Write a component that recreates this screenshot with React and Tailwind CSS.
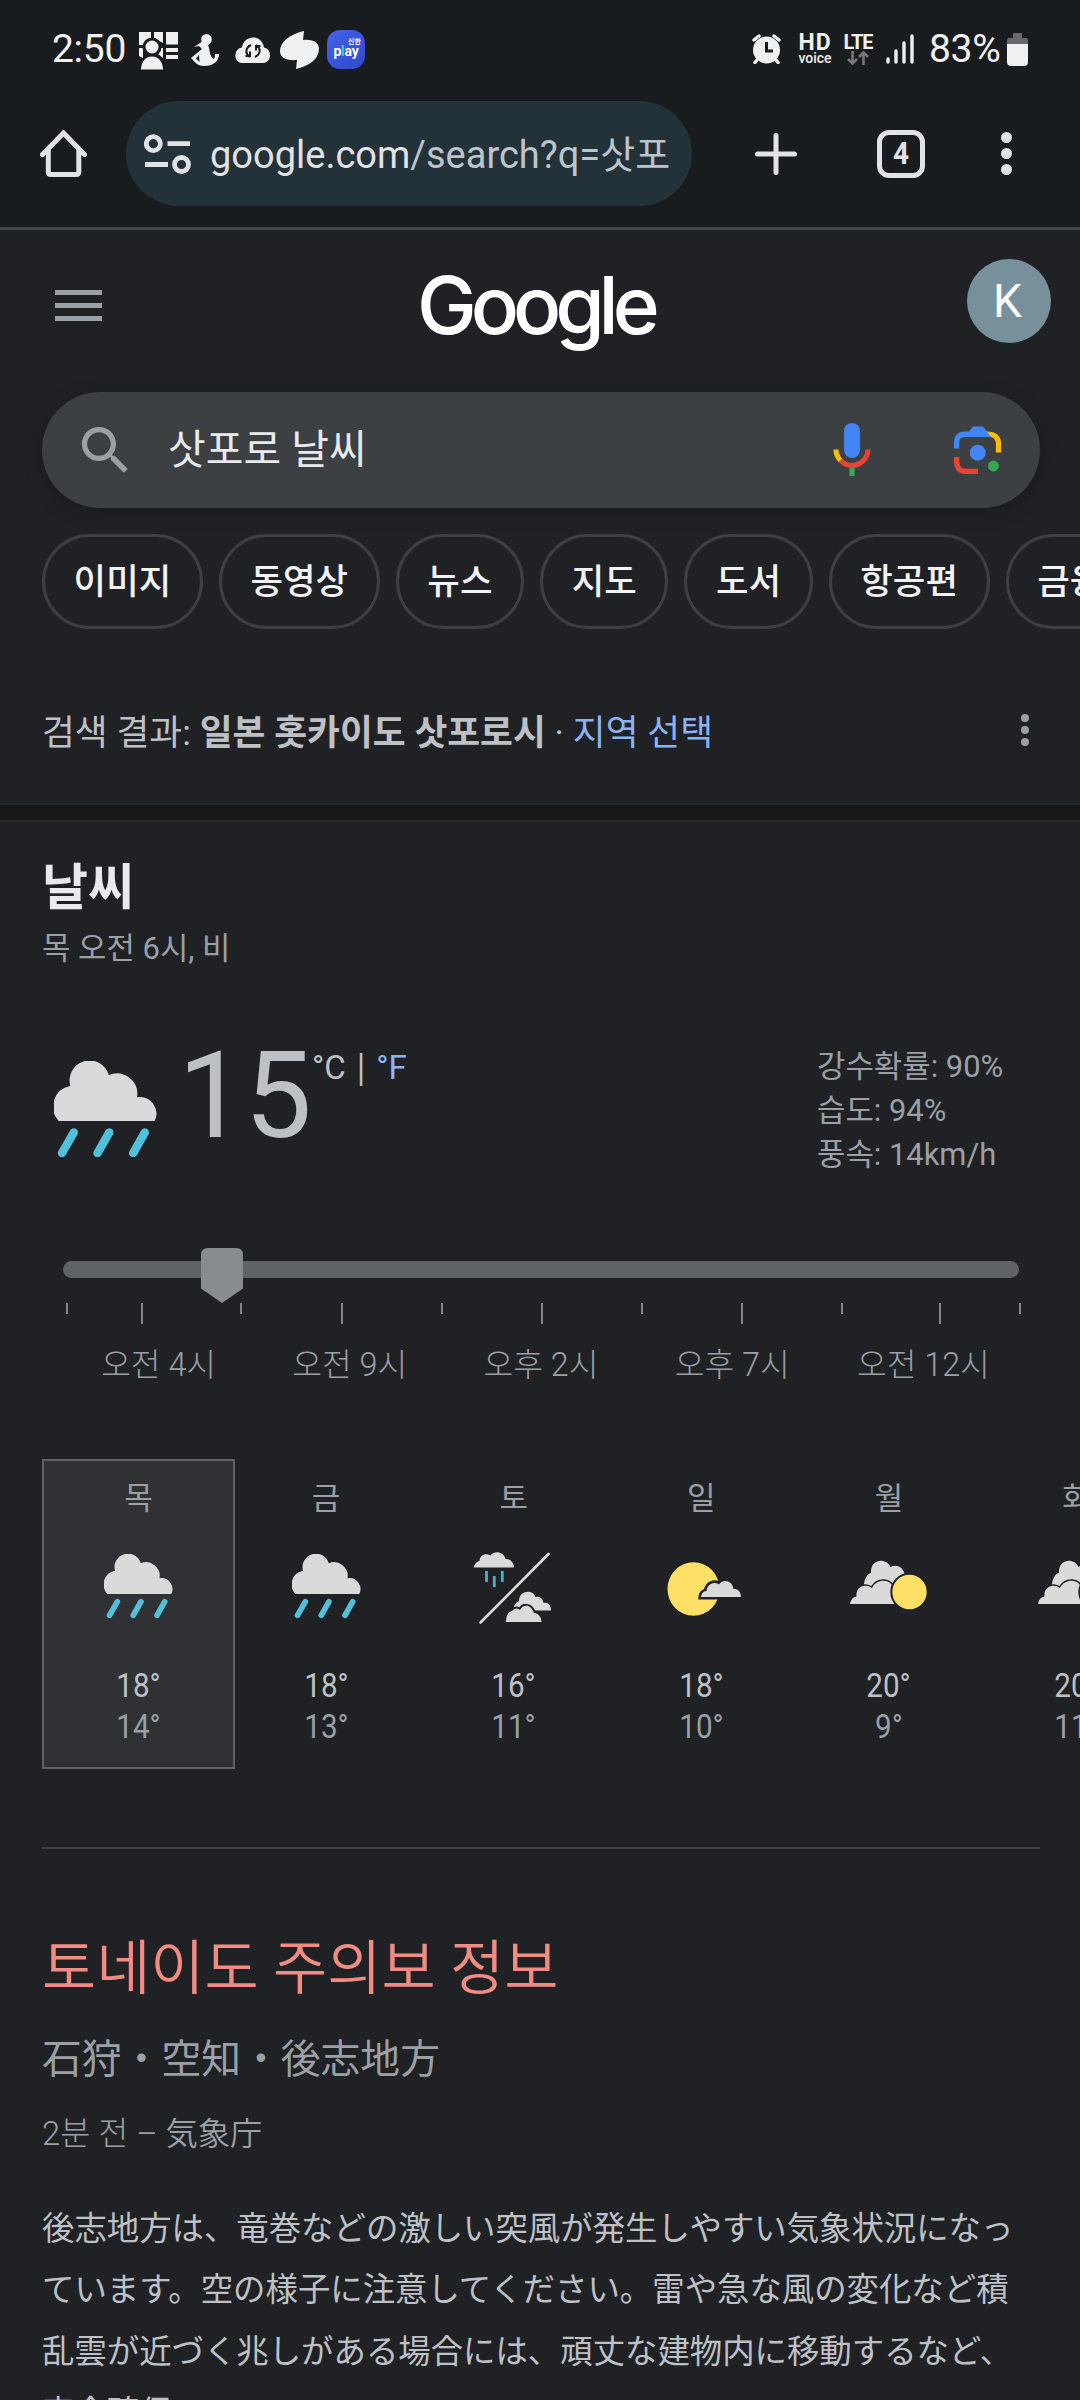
const filters = ["이미지", "동영상", "뉴스", "지도", "도서", "항공편", "금융"];

const hours = ["오전 4시", "오전 9시", "오후 2시", "오후 7시", "오전 12시"];

// gap to the next tick, in px
const ticks = [75, 99, 101, 100, 100, 100, 100, 100, 98, 80, 2];

const days = [
  { name: "목", icon: RainIcon, high: 18, low: 14, selected: true },
  { name: "금", icon: RainIcon, high: 18, low: 13 },
  { name: "토", icon: RainOrCloudIcon, high: 16, low: 11 },
  { name: "일", icon: MostlySunnyIcon, high: 18, low: 10 },
  { name: "월", icon: PartlyCloudyIcon, high: 20, low: 9 },
  { name: "화", icon: PartlyCloudyIcon, high: 20, low: 11 },
];

const alertLines = [
  "後志地方は、竜巻などの激しい突風が発生しやすい気象状況になっ",
  "ています。空の様子に注意してください。雷や急な風の変化など積",
  "乱雲が近づく兆しがある場合には、頑丈な建物内に移動するなど、",
  "安全確保",
];

function RainIcon({ className = "h-[64px] w-[69px]" }) {
  return (
    <svg viewBox="0 0 103 96" className={className}>
      <path
        d="M4.7 60A21 21 0 0 1 16.3 25A20 20 0 0 1 54.8 14A20.5 20.5 0 0 1 83 36.3A16.5 16.5 0 0 1 100.6 60Z"
        fill="#dadada"
      />
      <path
        d="M19.8 71.5L8 92M55.2 71.5L43.6 92M90.8 71.5L79.3 92"
        stroke="#4fc1dd"
        strokeWidth="8.5"
        strokeLinecap="round"
      />
    </svg>
  );
}

function RainOrCloudIcon() {
  return (
    <svg viewBox="0 0 79 76" className="mt-[3px] h-[76px] w-[79px]">
      <path d="M74.500 4L6.500 72.500" stroke="#dadada" strokeWidth="2.600" strokeLinecap="round" />
      <path
        d="M0 17.500C.500 13.500 3 11.500 5.500 11C5.500 5 11.500 2.500 16.500 5.500C20 .500 29.500 1 31.500 9C36 8.500 40 12.500 40 17.500Z"
        fill="#dadada"
      />
      <path
        d="M12.500 21V32M20.300 26V37M28.300 21V32"
        stroke="#4fb0c4"
        strokeWidth="2.800"
      />
      <path
        d="M40 58C40 54 43 52 45 51C45 40 59 39 61.500 47C66 45.500 69 49 69.500 53C74 52 77 55 77 60.500H61Z"
        fill="#dadada"
      />
      <path
        d="M32 72C32 66 34 62 38 61C42 56.500 45 59 46 60C49 54 57 54 60 63C64 63 67.500 67 67.500 72Z"
        fill="#dadada"
        stroke="#202124"
        strokeWidth="4"
        paintOrder="stroke"
      />
    </svg>
  );
}

function MostlySunnyIcon() {
  return (
    <svg viewBox="0 0 80 76" className="mt-[5px] h-[76px] w-[80px]">
      <ellipse cx="32.500" cy="38" rx="26" ry="26.700" fill="#ffe066" />
      <path
        d="M40 46C40.500 42 42.500 40.500 45.500 40C46 32.500 54 30 58 33.500C62 27.500 71.500 29.500 72.500 38C77 37.500 80 41 80 46Z"
        fill="#dadada"
        stroke="#202124"
        strokeWidth="5"
        paintOrder="stroke"
      />
    </svg>
  );
}

function PartlyCloudyIcon() {
  return (
    <svg viewBox="0 0 78 76" className="mt-[4px] h-[76px] w-[78px]">
      <path
        d="M14 40C13 32 16 24 21 23C20 9 36 7 40.500 17C46 14 53.500 17 55 25L50 42H18Z"
        fill="#dadada"
      />
      <path
        d="M0 54C1 49 3.500 47 6.500 46.500C5.500 37 15 33 22 38C27 28 42 28 44 40L48 54Z"
        fill="#dadada"
        stroke="#202124"
        strokeWidth="3"
        paintOrder="stroke"
      />
      <circle cx="59.500" cy="42" r="18.200" fill="#ffe066" stroke="#202124" strokeWidth="2" />
    </svg>
  );
}

function StatusBar() {
  return (
    <div className="flex h-[101px] items-center pl-[52px] text-[39px] text-[#f0f0f0]">
      <span className="-mt-[2px] w-[75px] tracking-[-0.3px]">2:50</span>
      <svg viewBox="0 0 40 38" className="ml-3 h-[38px] w-[40px]" fill="#f0f0f0">
        <path d="M0 0H12V8L6 13H0ZM15 0H24V11L15 6ZM27 0H39V12.500H27ZM0 16H4V26L0 24ZM27 16H39V20H27ZM27 23H39V27H27ZM19 16H24V26L19 22Z" />
        <circle cx="13" cy="15" r="8" stroke="#191c1e" strokeWidth="3" />
        <path d="M2 37.500C2 20 24 20 24 37.500Z" />
      </svg>
      <svg viewBox="0 0 30 32" className="-mt-[2px] ml-[12px] h-[32px] w-[30px]" fill="#f0f0f0">
        <ellipse cx="15.500" cy="5.500" rx="5.300" ry="5.500" />
        <path d="M3 13L12 7L17 11C19 15 18 18 20 22C22 26 24 26 24 20H28C28 26 24 32 13 32C6 32 4 28 0 24L11 15L8 12Z" />
        <path d="M8 21L5 24.500L8.500 28Z" fill="#191c1e" />
      </svg>
      <svg viewBox="0 0 40 26" className="-mt-[2px] ml-[12px] h-[26px] w-[40px]">
        <path
          d="M8 26A8 8 0 0 1 9 10.500C11-3 29-3 31 10.500A8 8 0 0 1 31 26Z"
          fill="#f0f0f0"
        />
        <path
          d="M18 8C12 11 12 17 17 20M22 20C28 17 28 11 23 8M12.500 19H17V14.500M27.500 9H23V13.500"
          fill="none"
          stroke="#191c1e"
          strokeWidth="2"
        />
      </svg>
      <svg viewBox="0 0 40 38" className="-mt-[2px] ml-[7px] h-[38px] w-[40px]" fill="#f0f0f0">
        <path d="M24 0L23 9C34 8 39 12 39 18C39 28 29 35 16 38L17 29C5 30 0 26 0 20C0 11 10 3 24 0Z" />
      </svg>
      <div className="-mt-[2px] ml-[7px] flex h-[39px] w-[38px] flex-col items-center justify-center rounded-[13px] bg-linear-to-br from-[#4563e8] to-[#2f49cd] text-white">
        <span className="-mt-1 mr-1 self-end font-['Noto_Sans_CJK_KR',sans-serif] text-[7px] leading-[8px] font-bold">
          신한
        </span>
        <span className="text-[14px] leading-[13px] font-bold tracking-[-0.2px]">
          p<span className="text-[#27d3ee]">l</span>ay
        </span>
      </div>

      <svg viewBox="0 0 30 30" className="-mt-[4px] ml-auto h-[30px] w-[30px]">
        <circle cx="14.500" cy="16" r="13.500" fill="#f0f0f0" />
        <path
          d="M2 6L7 2M27 6L22 2M5 26L3 28.500M24 26L26 28.500"
          stroke="#f0f0f0"
          strokeWidth="3.500"
          strokeLinecap="round"
        />
        <path d="M14.500 8V17H21" fill="none" stroke="#191c1e" strokeWidth="3" />
      </svg>
      <div className="-mt-[3px] ml-4 flex w-[34px] flex-col items-center font-bold">
        <span className="text-[23px] leading-[18px] tracking-[1px]">HD</span>
        <span className="text-[14px] leading-[12px] font-medium">voice</span>
      </div>
      <div className="-mt-[3px] ml-[10px] flex w-[32px] flex-col items-center">
        <span className="text-[20px] leading-[17px] font-bold tracking-[-1px]">LTE</span>
        <svg viewBox="0 0 22 14" className="h-[14px] w-[22px]">
          <path
            d="M5.500 0V12M1 8L5.500 12.500L10 8M16.500 14V2M12 6L16.500 1.500L21 6"
            fill="none"
            stroke="#757779"
            strokeWidth="2.600"
          />
        </svg>
      </div>
      <svg viewBox="0 0 28 30" className="-mt-[4px] ml-[12px] h-[30px] w-[28px]">
        <path
          d="M2 25V28M10 17V28M18 9V28M26 2V28"
          stroke="#f0f0f0"
          strokeWidth="3.400"
          strokeLinecap="round"
        />
      </svg>
      <span className="-mt-[2px] ml-[15px] w-[72px] tracking-[-0.3px]">83%</span>
      <svg viewBox="0 0 22 33" className="-mt-[3px] mr-[51px] ml-[6px] h-[33px] w-[22px]">
        <path d="M6 0H15V5H19Q21 5 21 8V12H0V8Q0 5 2 5H6Z" fill="#66686a" />
        <path d="M0 11H21V29Q21 33 17 33H4Q0 33 0 29Z" fill="#f0f0f0" />
      </svg>
    </div>
  );
}

function BrowserBar() {
  return (
    <div className="flex h-[105px] items-center">
      <svg viewBox="0 0 48 48" className="ml-[40px] h-[48px] w-[48px]">
        <path
          d="M2.500 24.500L23.500 3L44.500 24.500M8.300 20V42Q8.300 44.500 11 44.500H36Q38.800 44.500 38.800 42V20"
          fill="none"
          stroke="#e1e3e5"
          strokeWidth="5"
          strokeLinecap="round"
        />
      </svg>
      <div className="ml-[38px] flex h-full w-[566px] items-center rounded-full bg-[#233138] pl-[18px]">
        <svg
          viewBox="0 0 48 40"
          className="h-[40px] w-[48px]"
          fill="none"
          stroke="#e1e3e5"
          strokeWidth="4.800"
        >
          <circle cx="9.300" cy="9.700" r="7" />
          <circle cx="37.500" cy="30.500" r="7" />
          <path d="M23.500 9.700H46M1 30.500H24" />
        </svg>
        <span className="mt-[4px] ml-[18px] text-[38px] whitespace-nowrap text-[#e1e3e5]">
          google.com<span className="text-[#bcc5cb]">/search?q=삿포</span>
        </span>
      </div>
      <svg viewBox="0 0 42 42" className="ml-[63px] h-[42px] w-[42px]">
        <path
          d="M21 2.500V39.500M2.500 21H39.500"
          stroke="#e1e3e5"
          strokeWidth="5"
          strokeLinecap="round"
        />
      </svg>
      <div className="ml-[80px] flex h-[48px] w-[48px] items-center justify-center rounded-[12px] border-[5px] border-[#e1e3e5]">
        <span className="scale-x-90 text-[31px] leading-none font-bold text-[#e1e3e5]">4</span>
      </div>
      <div className="ml-[76px] flex flex-col gap-[5px]">
        <span className="size-[11px] rounded-full bg-[#e1e3e5]" />
        <span className="size-[11px] rounded-full bg-[#e1e3e5]" />
        <span className="size-[11px] rounded-full bg-[#e1e3e5]" />
      </div>
    </div>
  );
}

function SearchHeader() {
  return (
    <header className="pr-[40px] pl-[42px]">
      <div className="flex h-[162px] items-start">
        <div className="mt-[60px] ml-[13px] flex w-[47px] flex-col gap-[8px]">
          <span className="h-[5px] bg-[#9aa0a6]" />
          <span className="h-[5px] bg-[#9aa0a6]" />
          <span className="h-[5px] bg-[#9aa0a6]" />
        </div>
        <span className="mt-[25px] ml-[315px] w-[240px] font-['Inter',sans-serif] text-[80px] leading-[100px] font-medium tracking-[-6.1px] text-white">
          Google
        </span>
        <div className="mt-[29px] -mr-[11px] ml-auto flex size-[84px] items-center justify-center rounded-full bg-[#78909c] pr-[3px] text-[46px] text-white">
          K
        </div>
      </div>
      <div className="flex h-[116px] items-center rounded-full bg-[#3c4043] pl-[32px] shadow-[0_4px_16px_rgba(23,23,23,0.6)]">
        <svg viewBox="0 0 24 24" className="h-[63px] w-[63px]" fill="#9aa0a6">
          <path d="M15.500 14h-.790l-.280-.270A6.471 6.471 0 0 0 16 9.500 6.500 6.500 0 1 0 9.500 16c1.610 0 3.090-.590 4.230-1.570l.270.280v.790l5 4.990L20.490 19l-4.990-5zm-6 0C7.010 14 5 11.990 5 9.500S7.010 5 9.500 5 14 7.010 14 9.500 11.990 14 9.500 14z" />
        </svg>
        <span className="mt-[2px] ml-[31px] text-[41px] text-[#e8eaed]">삿포로 날씨</span>
        <svg viewBox="0 0 38 54" className="ml-auto h-[54px] w-[38px]">
          <rect x="11" y="0" width="16" height="35" rx="8" fill="#4285f4" />
          <path d="M16.400 44H21.600V53H16.400Z" fill="#34a853" />
          <path d="M3 26.500A16 16 0 0 0 7.500 37.500" fill="none" stroke="#fbbc04" strokeWidth="5.200" />
          <path d="M7.500 37.500A16 16 0 0 0 35 26.500" fill="none" stroke="#ea4335" strokeWidth="5.200" />
        </svg>
        <svg viewBox="0 0 48 48" className="mr-[38px] ml-[83px] h-[48px] w-[48px]">
          <path
            d="M29 8H33Q44.500 8 44.500 18V26.500"
            fill="none"
            stroke="#fbbc04"
            strokeWidth="5.200"
          />
          <path d="M0 22.500V17Q0 5.500 11 5.500H15L19 .500H29L37 11H11Q5.200 11 5.200 17V22.500Z" fill="#4285f4" />
          <path
            d="M2.600 31V35Q2.600 45.300 12 45.300H24"
            fill="none"
            stroke="#ea4335"
            strokeWidth="5.200"
          />
          <circle cx="23.700" cy="26.700" r="8" fill="#4285f4" />
          <circle cx="39.400" cy="40" r="5.400" fill="#34a853" />
        </svg>
      </div>
      <nav className="mt-[26px] flex gap-[16px]">
        {filters.map((label) => (
          <span
            key={label}
            className="flex h-[95px] shrink-0 items-center rounded-full border-[3px] border-[#3c4043] px-[28.6px] pt-[3px] text-[35.4px] font-medium text-[#f1f3f4]"
          >
            {label}
          </span>
        ))}
      </nav>
    </header>
  );
}

function LocationLine() {
  return (
    <div className="flex h-[174px] items-center justify-between pt-[28px] pr-[51px] pl-[42px] text-[35.7px] whitespace-nowrap text-[#bdc1c6]">
      <p className="pt-[7px]">
        검색 결과: <b className="font-bold">일본 홋카이도 삿포로시</b> ·{" "}
        <a className="text-[#8ab4f8]">지역 선택</a>
      </p>
      <div className="flex flex-col gap-[4px]">
        <span className="size-[8px] rounded-full bg-[#9aa0a6]" />
        <span className="size-[8px] rounded-full bg-[#9aa0a6]" />
        <span className="size-[8px] rounded-full bg-[#9aa0a6]" />
      </div>
    </div>
  );
}

function CurrentWeather() {
  return (
    <div className="flex h-[132px] items-start">
      <RainIcon className="mt-[17px] ml-[12px] h-[96px] w-[103px]" />
      <span className="-mt-[8px] ml-[21px] w-[134px] text-[120px] leading-[120px] tracking-[-1px] text-[#bdc1c6]">
        15
      </span>
      <span className="mt-[2px] text-[33px] leading-[44px] text-[#bdc1c6]">
        °C <span className="mx-[3px] inline-block scale-y-115">|</span>{" "}
        <span className="text-[#8ab4f8]">°F</span>
      </span>
      <div className="mt-[1px] mr-[37px] ml-auto w-[186px] text-[30.9px] leading-[44px] whitespace-nowrap text-[#9aa0a6]">
        <p>강수확률: 90%</p>
        <p>습도: 94%</p>
        <p>풍속: 14km/h</p>
      </div>
    </div>
  );
}

function HourSlider() {
  return (
    <div className="ml-[21px] w-[956px]">
      <div className="relative h-[17px] rounded-full bg-[#5f6368]">
        <svg viewBox="0 0 42 55" className="absolute -top-[13px] left-[138px] h-[55px] w-[42px]">
          <path d="M7 0H35Q42 0 42 7V40.500L21 55L0 40.500V7Q0 0 7 0Z" fill="#878c90" />
        </svg>
      </div>
      <div className="mt-[25px] flex h-[21px] w-[960px] pl-[3px]">
        {ticks.map((gap, i) => (
          <span key={i} className="shrink-0" style={{ width: gap }}>
            <span
              className={
                i % 2 ? "block h-[21px] w-[2px] bg-[#80868b]" : "block h-[11px] w-[2px] bg-[#80868b]"
              }
            />
          </span>
        ))}
      </div>
      <div className="mt-[18px] grid grid-cols-5 text-center text-[32.3px] leading-[46px] font-light text-[#9aa0a6]">
        {hours.map((hour) => (
          <span key={hour}>{hour}</span>
        ))}
      </div>
    </div>
  );
}

function DayCard({ name, icon: Icon, high, low, selected }) {
  return (
    <div
      className={`-mr-[5.4px] flex h-[310px] w-[193px] shrink-0 flex-col items-center border-2 pt-[16px] ${
        selected ? "border-[#5f6368] bg-[#303134]" : "border-transparent"
      }`}
    >
      <span className="text-[31px] leading-[44px] text-[#9aa0a6]">{name}</span>
      <div className="mt-[27px] flex h-[76px] items-center">
        <Icon />
      </div>
      <span className="mt-[41px] scale-x-[0.87] text-[34px] leading-[41px] text-[#bdc1c6]">
        {high}°
      </span>
      <span className="scale-x-[0.87] text-[34px] leading-[41px] text-[#9aa0a6]">{low}°</span>
    </div>
  );
}

function WeatherAlert() {
  return (
    <section className="mt-[81px] whitespace-nowrap">
      <h2 className="text-[58.9px] leading-[78px] font-[350] text-[#f28b82]">
        토네이도 주의보 정보
      </h2>
      <p className="mt-[18px] font-['Noto_Sans_CJK_JP',sans-serif] text-[39.8px] leading-[60px] text-[#9aa0a6]">
        石狩・空知・後志地方
      </p>
      <p className="mt-[22px] text-[32.7px] leading-[46px] font-light text-[#9aa0a6]">
        2분 전 –{" "}
        <span className="font-['Noto_Sans_CJK_JP',sans-serif] text-[32.3px] font-[350]">気象庁</span>
      </p>
      <div className="mt-[38px] font-['Noto_Sans_CJK_JP',sans-serif] text-[32.4px] leading-[61.3px] text-[#bdc1c6]">
        {alertLines.map((line) => (
          <p key={line}>{line}</p>
        ))}
      </div>
    </section>
  );
}

export default function App() {
  return (
    <div className="h-[2400px] w-[1080px] overflow-hidden bg-[#202124] font-['Roboto','Noto_Sans_CJK_KR',sans-serif]">
      <div className="h-[230px] border-b-[3px] border-[#3f484c] bg-[#191c1e]">
        <StatusBar />
        <BrowserBar />
      </div>
      <SearchHeader />
      <LocationLine />
      <div className="h-[19px] border-y-2 border-[#25282a] bg-[#171717]" />
      <main className="pr-[40px] pl-[42px]">
        <h1 className="mt-[28px] text-[50px] leading-[76px] font-bold text-[#e8eaed]">날씨</h1>
        <p className="text-[30.9px] leading-[46px] text-[#9aa0a6]">목 오전 6시, 비</p>
        <div className="mt-[72px]">
          <CurrentWeather />
        </div>
        <div className="mt-[85px]">
          <HourSlider />
        </div>
        <div className="mt-[71px] flex w-[1038px] overflow-hidden">
          {days.map((day) => (
            <DayCard key={day.name} {...day} />
          ))}
        </div>
        <hr className="mt-[78px] border-t-2 border-[#3c4043]" />
        <WeatherAlert />
      </main>
    </div>
  );
}
